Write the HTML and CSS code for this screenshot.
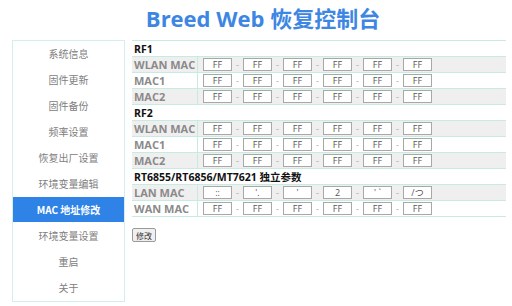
FILE: index.html
```html
<!DOCTYPE html>
<html>
<head>
<meta charset="utf-8">
<link rel="stylesheet" href="styles.css">
</head>
<body>
<h1 class="title">Breed Web 恢复控制台</h1>
<div class="layout">
  <ul class="nav">
    <li>系统信息</li>
    <li>固件更新</li>
    <li>固件备份</li>
    <li>频率设置</li>
    <li>恢复出厂设置</li>
    <li>环境变量编辑</li>
    <li class="active">MAC 地址修改</li>
    <li>环境变量设置</li>
    <li>重启</li>
    <li>关于</li>
  </ul>
  <div class="main">
    <table class="mac">
      <tr class="head"><td colspan="2">RF1</td></tr>
      <tr class="alt"><th>WLAN MAC</th><td><div class="fields"><span class="f">FF</span><i>-</i><span class="f">FF</span><i>-</i><span class="f">FF</span><i>-</i><span class="f">FF</span><i>-</i><span class="f">FF</span><i>-</i><span class="f">FF</span></div></td></tr>
      <tr><th>MAC1</th><td><div class="fields"><span class="f">FF</span><i>-</i><span class="f">FF</span><i>-</i><span class="f">FF</span><i>-</i><span class="f">FF</span><i>-</i><span class="f">FF</span><i>-</i><span class="f">FF</span></div></td></tr>
      <tr class="alt"><th>MAC2</th><td><div class="fields"><span class="f">FF</span><i>-</i><span class="f">FF</span><i>-</i><span class="f">FF</span><i>-</i><span class="f">FF</span><i>-</i><span class="f">FF</span><i>-</i><span class="f">FF</span></div></td></tr>
      <tr class="head"><td colspan="2">RF2</td></tr>
      <tr class="alt"><th>WLAN MAC</th><td><div class="fields"><span class="f">FF</span><i>-</i><span class="f">FF</span><i>-</i><span class="f">FF</span><i>-</i><span class="f">FF</span><i>-</i><span class="f">FF</span><i>-</i><span class="f">FF</span></div></td></tr>
      <tr><th>MAC1</th><td><div class="fields"><span class="f">FF</span><i>-</i><span class="f">FF</span><i>-</i><span class="f">FF</span><i>-</i><span class="f">FF</span><i>-</i><span class="f">FF</span><i>-</i><span class="f">FF</span></div></td></tr>
      <tr class="alt"><th>MAC2</th><td><div class="fields"><span class="f">FF</span><i>-</i><span class="f">FF</span><i>-</i><span class="f">FF</span><i>-</i><span class="f">FF</span><i>-</i><span class="f">FF</span><i>-</i><span class="f">FF</span></div></td></tr>
      <tr class="head"><td colspan="2">RT6855/RT6856/MT7621 独立参数</td></tr>
      <tr class="alt"><th>LAN MAC</th><td><div class="fields"><span class="f">::</span><i>-</i><span class="f">'.</span><i>-</i><span class="f">'</span><i>-</i><span class="f">2</span><i>-</i><span class="f">' `</span><i>-</i><span class="f">/つ</span></div></td></tr>
      <tr><th>WAN MAC</th><td><div class="fields"><span class="f">FF</span><i>-</i><span class="f">FF</span><i>-</i><span class="f">FF</span><i>-</i><span class="f">FF</span><i>-</i><span class="f">FF</span><i>-</i><span class="f">FF</span></div></td></tr>
    </table>
    <button class="btn">修改</button>
  </div>
</div>
</body>
</html>
```
FILE: styles.css
```css
html, body {
  margin: 0;
  padding: 0;
  background: #ffffff;
  font-family: "Open Sans", "Noto Sans CJK SC", sans-serif;
}
.title {
  margin: 0;
  height: 36px;
  line-height: 36px;
  padding-left: 14px;
  text-align: center;
  font-size: 22px;
  font-weight: 700;
  color: #3d86e2;
  font-family: "Open Sans", "Noto Sans CJK SC", sans-serif;
}
.layout {
  display: flex;
  align-items: flex-start;
  padding: 4px 0 0 12px;
  gap: 6px;
}
.nav {
  list-style: none;
  margin: 0;
  padding: 0;
  width: 113px;
  border: 1px solid #d3eeee;
  height: 262px;
  box-sizing: border-box;
}
.nav li {
  height: 26px;
  line-height: 26px;
  text-align: center;
  font-size: 10px;
  color: #808080;
  font-family: "Noto Sans CJK SC", sans-serif;
}
.nav li.active {
  background: #2f83e6;
  color: #ffffff;
  font-weight: 700;
  height: 25px;
  line-height: 25px;
  margin-bottom: 1px;
}
.main {
  flex: 1;
  padding-right: 5px;
  margin-left: 1px;
}
.mac {
  width: 374px;
  border-collapse: collapse;
  border-top: 1px solid #c6ece2;
}
.mac tr {
  height: 16px;
  border-bottom: 1px solid #c6ece2;
}
.mac tr.alt {
  background: #f0efef;
}
.mac tr.head td {
  font-weight: 700;
  font-size: 10.5px;
  color: #111;
  padding: 0 0 0 2px;
  font-family: "Open Sans", "Noto Sans CJK SC", sans-serif;
}
.mac th {
  width: 63px;
  text-align: left;
  padding: 0 0 0 2px;
  font-size: 11px;
  font-weight: 700;
  color: #8a8a8a;
  border-right: 1px solid #c6ece2;
  white-space: nowrap;
}
.mac td {
  padding: 0;
  height: 15px;
}
.fields {
  display: flex;
  align-items: center;
  padding-left: 5px;
}
.f {
  display: inline-block;
  width: 29px;
  height: 13px;
  box-sizing: border-box;
  border: 1px solid #a8a8a8;
  background: #fff;
  font-size: 9px;
  line-height: 11px;
  text-align: center;
  color: #555;
  font-family: "Open Sans", "Noto Sans CJK SC", sans-serif;
}
.fields i {
  font-style: normal;
  width: 11px;
  text-align: center;
  font-size: 9px;
  color: #aaa;
}
.btn {
  margin-top: 11px;
  font-family: "Noto Sans CJK SC", sans-serif;
  font-size: 8px;
  padding: 0 3px;
  height: 14px;
  line-height: 11px;
  border: 1px solid #9a9a9a;
  border-radius: 2px;
  background: #f0f0f0;
  color: #333;
}
```
